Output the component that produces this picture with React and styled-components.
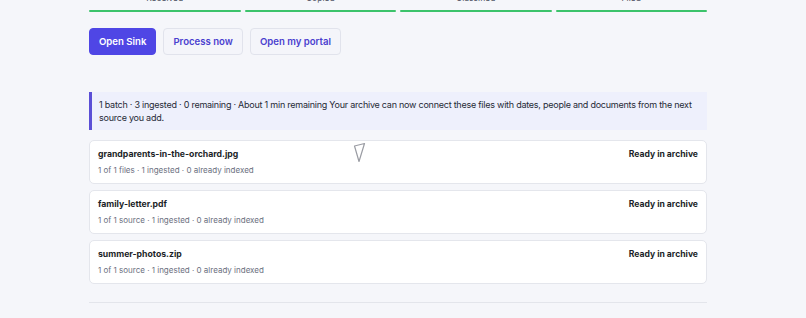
import React from "react";
import styled, { createGlobalStyle } from "styled-components";

const Global = createGlobalStyle`
  html, body { margin: 0; padding: 0; background: #f5f6fa; }
  body { font-family: Inter, "Noto Sans", sans-serif; color: #1f2330; -webkit-font-smoothing: antialiased; }
  * { box-sizing: border-box; }
`;

const Page = styled.div`
  width: 618px;
  margin-left: 89px;
  margin-top: -8px;
  display: flex;
  flex-direction: column;
`;

const Steps = styled.div`
  display: grid;
  grid-template-columns: repeat(4, 1fr);
  column-gap: 4px;
`;

const Step = styled.div`
  display: flex;
  flex-direction: column;
  align-items: center;
  gap: 6px;
`;

const StepLabel = styled.span`
  font-size: 8.5px;
  line-height: 12px;
  color: #4b5060;
`;

const StepBar = styled.div`
  align-self: stretch;
  height: 2px;
  background: #3cc36b;
  border-radius: 1px;
`;

const Actions = styled.div`
  display: flex;
  gap: 7px;
  margin-top: 16px;
`;

const Button = styled.button`
  height: 27px;
  padding: 0 9px;
  border-radius: 4px;
  font-family: Inter, "Noto Sans", sans-serif;
  font-size: 9.6px;
  font-weight: 600;
  cursor: pointer;
  border: 1px solid ${(p) => (p.$primary ? "#4f46e5" : "#e1e3ec")};
  background: ${(p) => (p.$primary ? "#4f46e5" : "#f4f5fa")};
  color: ${(p) => (p.$primary ? "#ffffff" : "#4a3fcf")};
`;

const Notice = styled.div`
  margin-top: 37px;
  background: #eef0fc;
  border-left: 3px solid #5b4fd6;
  padding: 7px 6px 6px 7px;
  font-size: 9px;
  letter-spacing: -0.24px;
  line-height: 12.5px;
  color: #262a36;
`;

const List = styled.div`
  margin-top: 10px;
  display: flex;
  flex-direction: column;
  gap: 6px;
`;

const Card = styled.div`
  position: relative;
  height: 44px;
  background: #ffffff;
  border: 1px solid #e4e6ec;
  border-radius: 5px;
  padding: 7px 8px 0 8px;
  display: flex;
  justify-content: space-between;
  align-items: flex-start;
`;

const Info = styled.div`
  display: flex;
  flex-direction: column;
  gap: 3.5px;
`;

const Title = styled.div`
  font-size: 8.7px;
  font-weight: 700;
  line-height: 12px;
  color: #1c1f28;
`;

const Sub = styled.div`
  font-size: 8px;
  line-height: 12px;
  color: #6b7080;
`;

const Status = styled.div`
  font-size: 8.6px;
  font-weight: 700;
  line-height: 12px;
  color: #1c1f28;
`;

const Pointer = styled.svg`
  position: absolute;
  left: 263px;
  top: 1px;
`;

const Divider = styled.div`
  margin-top: 18px;
  height: 1px;
  background: #e3e5eb;
`;

const steps = ["Received", "Copied", "Classified", "Filed"];
const items = [
  { name: "grandparents-in-the-orchard.jpg", sub: "1 of 1 files · 1 ingested · 0 already indexed", pointer: true },
  { name: "family-letter.pdf", sub: "1 of 1 source · 1 ingested · 0 already indexed" },
  { name: "summer-photos.zip", sub: "1 of 1 source · 1 ingested · 0 already indexed" },
];

export default function App() {
  return (
    <>
      <Global />
      <Page>
        <Steps>
          {steps.map((s) => (
            <Step key={s}>
              <StepLabel>{s}</StepLabel>
              <StepBar />
            </Step>
          ))}
        </Steps>
        <Actions>
          <Button $primary>Open Sink</Button>
          <Button>Process now</Button>
          <Button>Open my portal</Button>
        </Actions>
        <Notice>
          1 batch · 3 ingested · 0 remaining · About 1 min remaining Your archive can now connect these files with dates, people and documents from the next source you add.
        </Notice>
        <List>
          {items.map((it) => (
            <Card key={it.name}>
              <Info>
                <Title>{it.name}</Title>
                <Sub>{it.sub}</Sub>
              </Info>
              <Status>Ready in archive</Status>
              {it.pointer && (
                <Pointer width="14" height="22" viewBox="0 0 14 22">
                  <path d="M1.5 4 L11.5 1.5 L6 19.5 Z" fill="#ffffff" stroke="#9a9ca3" strokeWidth="1.2" strokeLinejoin="round" />
                </Pointer>
              )}
            </Card>
          ))}
        </List>
        <Divider />
      </Page>
    </>
  );
}
